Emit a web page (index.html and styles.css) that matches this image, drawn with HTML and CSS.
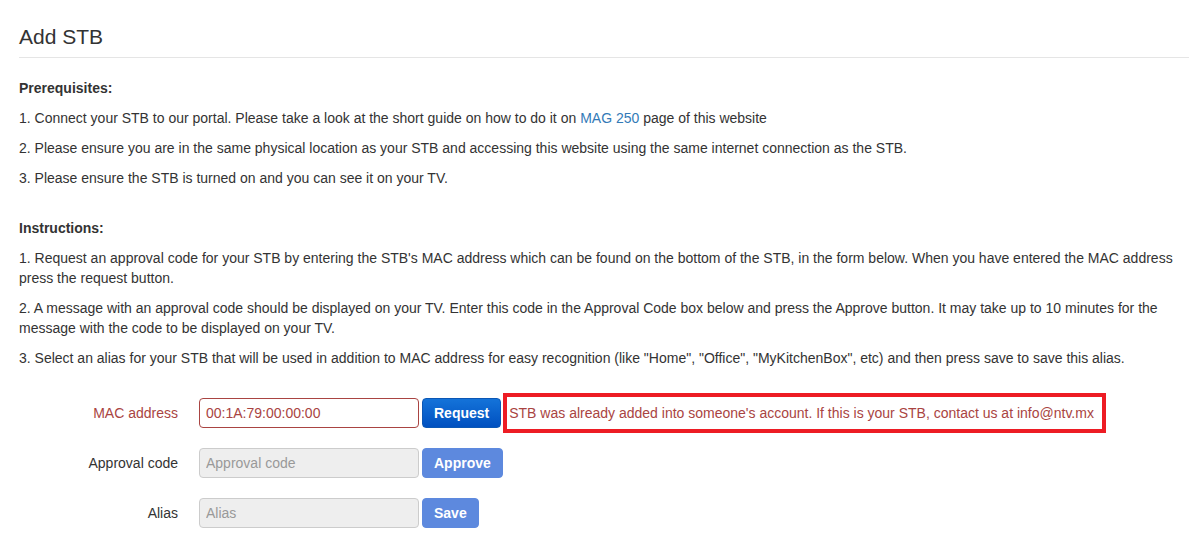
FILE: index.html
```html
<!DOCTYPE html>
<html>
<head>
<meta charset="utf-8">
<link rel="stylesheet" href="styles.css">
</head>
<body>
<div class="page">
  <h3 class="page-title">Add STB</h3>
  <div class="section">
    <p class="heading">Prerequisites:</p>
    <p>1. Connect your STB to our portal. Please take a look at the short guide on how to do it on <a href="#">MAG 250</a> page of this website</p>
    <p>2. Please ensure you are in the same physical location as your STB and accessing this website using the same internet connection as the STB.</p>
    <p>3. Please ensure the STB is turned on and you can see it on your TV.</p>
  </div>
  <div class="section second">
    <p class="heading">Instructions:</p>
    <p>1. Request an approval code for your STB by entering the STB's MAC address which can be found on the bottom of the STB, in the form below. When you have entered the MAC address press the request button.</p>
    <p>2. A message with an approval code should be displayed on your TV. Enter this code in the Approval Code box below and press the Approve button. It may take up to 10 minutes for the message with the code to be displayed on your TV.</p>
    <p>3. Select an alias for your STB that will be used in addition to MAC address for easy recognition (like "Home", "Office", "MyKitchenBox", etc) and then press save to save this alias.</p>
  </div>
  <form class="stb-form">
    <div class="row has-error">
      <label class="lbl">MAC address</label>
      <input class="field" type="text" value="00:1A:79:00:00:00">
      <button type="button" class="btn btn-primary">Request</button>
      <span class="error-box">STB was already added into someone's account. If this is your STB, contact us at info@ntv.mx</span>
    </div>
    <div class="row">
      <label class="lbl">Approval code</label>
      <input class="field" type="text" placeholder="Approval code" disabled>
      <button type="button" class="btn btn-disabled">Approve</button>
    </div>
    <div class="row">
      <label class="lbl">Alias</label>
      <input class="field" type="text" placeholder="Alias" disabled>
      <button type="button" class="btn btn-disabled">Save</button>
    </div>
  </form>
</div>
</body>
</html>
```
FILE: styles.css
```css
html, body {
  margin: 0;
  padding: 0;
  background: #fff;
}
body {
  font-family: "Liberation Sans", Arial, sans-serif;
  font-size: 14px;
  line-height: 20px;
  color: #333;
}
.page {
  padding: 0 8px 0 19px;
}
.page-title {
  margin: 0;
  padding: 24px 0 7px;
  font-size: 21px;
  line-height: 26px;
  font-weight: normal;
  color: #333;
  border-bottom: 1px solid #e5e5e5;
}
.section {
  padding-top: 20px;
}
.section.second {
  padding-top: 20px;
}
p {
  margin: 0 0 10px;
}
.heading {
  font-weight: bold;
}
a {
  color: #337ab7;
  text-decoration: none;
}
.stb-form {
  margin-top: 30px;
}
.row {
  display: flex;
  align-items: center;
  height: 30px;
  margin-bottom: 20px;
}
.lbl {
  width: 159px;
  text-align: right;
  margin-right: 21px;
  color: #333;
}
.field {
  box-sizing: border-box;
  width: 220px;
  height: 30px;
  margin: 0 3px 0 0;
  padding: 0 6px;
  font-family: "Liberation Sans", Arial, sans-serif;
  font-size: 14px;
  color: #555;
  background: #fff;
  border: 1px solid #ccc;
  border-radius: 4px;
  outline: none;
}
.field:disabled {
  background: #eee;
}
.field::placeholder {
  color: #999;
}
.has-error .lbl {
  color: #a94442;
}
.has-error .field {
  border-color: #a94442;
  color: #a94442;
}
.btn {
  box-sizing: border-box;
  height: 30px;
  padding: 0 11px;
  font-family: "Liberation Sans", Arial, sans-serif;
  font-size: 14px;
  font-weight: bold;
  color: #fff;
  border: 1px solid transparent;
  border-radius: 4px;
}
.btn-primary {
  background: linear-gradient(#1473d9, #0050c0);
  border-color: #0b57b5;
}
.btn-disabled {
  background: #5d89de;
  border-color: #5d89de;
}
.error-box {
  box-sizing: border-box;
  height: 40px;
  margin: -5px 0 -5px 2px;
  padding: 0 8px 0 2px;
  display: flex;
  align-items: center;
  color: #a94442;
  border: 4px solid #ed1c24;
  white-space: nowrap;
}
```
